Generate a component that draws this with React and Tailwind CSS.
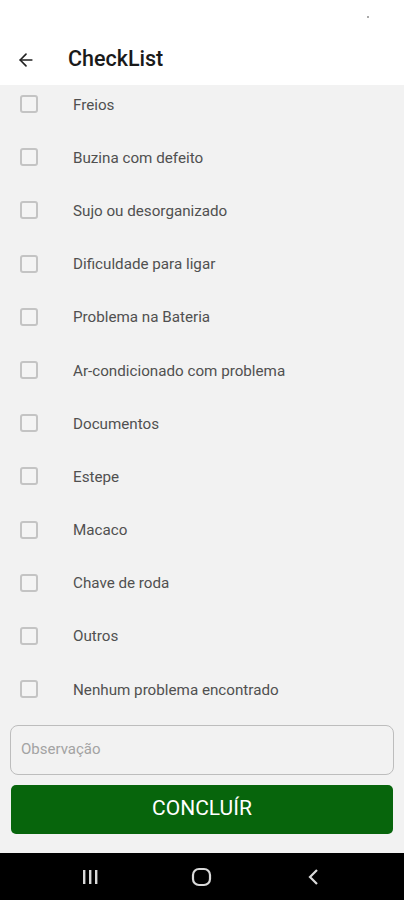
import { ArrowLeft } from "lucide-react";

const items = [
  "Freios",
  "Buzina com defeito",
  "Sujo ou desorganizado",
  "Dificuldade para ligar",
  "Problema na Bateria",
  "Ar-condicionado com problema",
  "Documentos",
  "Estepe",
  "Macaco",
  "Chave de roda",
  "Outros",
  "Nenhum problema encontrado",
];

function CheckRow({ label }) {
  return (
    <li className="h-[53.2px] flex items-center">
      <span className="ml-[20px] size-[18px] rounded-[3px] border-2 border-[#c4c4c4] bg-[#f4f4f4]"></span>
      <span className="ml-[35px] mt-[2px] text-[15.2px] text-[#505050]">{label}</span>
    </li>
  );
}

export default function App() {
  const rowsEls = items.map(item => <CheckRow key={item} label={item} />);

  return (
    <div className="w-[404px] h-[900px] flex flex-col bg-[#f2f2f2] font-['Roboto',sans-serif] overflow-hidden">
      <div className="h-[85px] bg-white flex flex-col">
        <div className="h-[34px] flex justify-end pr-[35px] pt-[16px]">
          <span className="size-[2px] bg-[#aaa]"></span>
        </div>
        <div className="flex items-center h-[50px] pt-[1px]">
          <ArrowLeft className="ml-[16px] size-[20px] text-[#222]" strokeWidth={2} />
          <h1 className="ml-[32px] text-[21.5px] font-medium text-[#1a1a1a]">CheckList</h1>
        </div>
      </div>

      <div className="flex-1 flex flex-col overflow-hidden">
        <ul className="-mt-[7.6px] flex flex-col">
          {rowsEls}
        </ul>

        <div className="mt-[9px] mx-[10px] h-[50px] rounded-[8px] border border-[#bdbdbd] flex items-center px-[10px]">
          <span className="text-[15px] text-[#a3a3a3]">Observação</span>
        </div>

        <button
          type="button"
          className="mt-[10px] mx-[11px] h-[49px] rounded-[5px] bg-[#07650c] text-white text-[21px] font-normal"
        >
          CONCLUÍR
        </button>
      </div>

      <div className="h-[47px] bg-black flex items-center pl-[70px] gap-[72px] text-[#d9d9d9]">
        <div className="w-[40px] flex justify-center">
          <svg width="18" height="16" viewBox="0 0 18 16">
            <rect x="2" y="1" width="2.4" height="14" fill="currentColor" />
            <rect x="8" y="1" width="2.4" height="14" fill="currentColor" />
            <rect x="14" y="1" width="2.4" height="14" fill="currentColor" />
          </svg>
        </div>
        <div className="w-[40px] flex justify-center">
          <svg width="22" height="20" viewBox="0 0 22 20">
            <rect x="2" y="2" width="17" height="16" rx="6" fill="none" stroke="currentColor" strokeWidth="2.2" />
          </svg>
        </div>
        <div className="w-[40px] flex justify-center">
          <svg width="14" height="18" viewBox="0 0 14 18">
            <path d="M10 2 L3 9 L10 16" fill="none" stroke="currentColor" strokeWidth="2.2" />
          </svg>
        </div>
      </div>
    </div>
  );
}
